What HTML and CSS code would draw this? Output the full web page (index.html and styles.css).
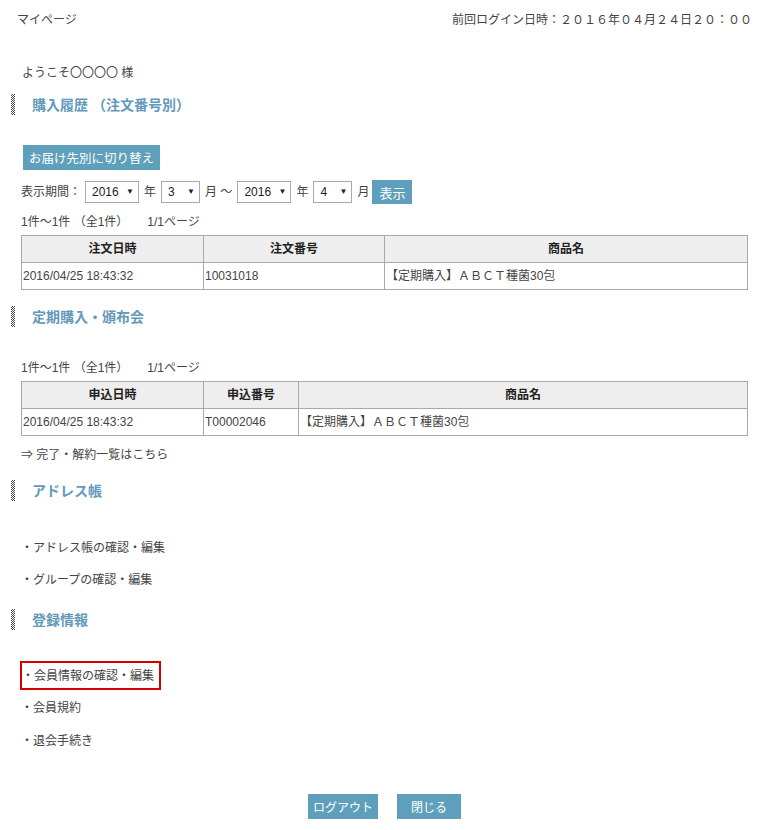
FILE: index.html
```html
<!DOCTYPE html>
<html lang="ja">
<head>
<meta charset="utf-8">
<title>マイページ</title>
<link rel="stylesheet" href="styles.css">
</head>
<body>
<div class="topbar">
  <span>マイページ</span>
  <span>前回ログイン日時：２０１６年０４月２４日２０：００</span>
</div>
<div class="page">
  <p class="line welcome">ようこそ〇〇〇〇 様</p>

  <h2 class="heading h1"><span class="mark"></span><span>購入履歴 （注文番号別）</span></h2>
  <button class="btn switch">お届け先別に切り替え</button>
  <div class="period">
    <span>表示期間：</span>
    <span class="sel w54"><span>2016</span><span class="arr">▼</span></span>
    <span>年</span>
    <span class="sel w39"><span>3</span><span class="arr">▼</span></span>
    <span>月 ～</span>
    <span class="sel w54"><span>2016</span><span class="arr">▼</span></span>
    <span>年</span>
    <span class="sel w39"><span>4</span><span class="arr">▼</span></span>
    <span>月</span>
    <button class="btn show">表示</button>
  </div>
  <p class="line count c1">1件～1件 （全1件）<span class="gap"></span>1/1ページ</p>
  <table class="list">
    <colgroup><col class="c-a"><col class="c-b"><col></colgroup>
    <tr><th>注文日時</th><th>注文番号</th><th>商品名</th></tr>
    <tr><td>2016/04/25 18:43:32</td><td>10031018</td><td>【定期購入】ＡＢＣＴ種菌30包</td></tr>
  </table>

  <h2 class="heading h2"><span class="mark"></span><span>定期購入・頒布会</span></h2>
  <p class="line count c2">1件～1件 （全1件）<span class="gap"></span>1/1ページ</p>
  <table class="list">
    <colgroup><col class="c-a"><col class="c-b2"><col></colgroup>
    <tr><th>申込日時</th><th>申込番号</th><th>商品名</th></tr>
    <tr><td>2016/04/25 18:43:32</td><td>T00002046</td><td>【定期購入】ＡＢＣＴ種菌30包</td></tr>
  </table>
  <p class="line done">⇒ 完了・解約一覧はこちら</p>

  <h2 class="heading h3"><span class="mark"></span><span>アドレス帳</span></h2>
  <p class="line item i1">・アドレス帳の確認・編集</p>
  <p class="line item i2">・グループの確認・編集</p>

  <h2 class="heading h4"><span class="mark"></span><span>登録情報</span></h2>
  <div class="i3"><span class="boxed">・会員情報の確認・編集</span></div>
  <p class="line item i4">・会員規約</p>
  <p class="line item i5">・退会手続き</p>

  <div class="actions">
    <button class="btn logout">ログアウト</button>
    <button class="btn close">閉じる</button>
  </div>
</div>
</body>
</html>
```

FILE: styles.css
```css
* { box-sizing: border-box; }
html, body { margin: 0; padding: 0; background: #fff; }
body {
  font-family: "Liberation Sans", "Noto Sans CJK JP", sans-serif;
  font-size: 12px;
  line-height: 18px;
  color: #444;
  width: 780px;
}
p, h2 { margin: 0; }

.line { height: 18px; white-space: nowrap; }
.gap { display: inline-block; width: 19px; }

.topbar {
  display: flex;
  justify-content: space-between;
  padding: 11px 28px 0 17px;
  height: 29px;
}

.page {
  padding: 0 32px 0 21px;
}

.welcome { margin-top: 35px; padding-left: 1px; }

.heading {
  display: flex;
  align-items: center;
  gap: 17px;
  margin-left: -10px;
  height: 21px;
  font-size: 14px;
  font-weight: bold;
  color: #6399bb;
}
.mark {
  display: block;
  width: 4px;
  height: 21px;
  background: repeating-conic-gradient(#4a4a4a 0 25%, #fff 0 50%) 0 0 / 2px 2px;
}
.h1 { margin-top: 12px; }
.h2 { margin-top: 16px; }
.h3 { margin-top: 16px; }
.h4 { margin-top: 20px; }

.btn {
  border: none;
  background: #5e9fbb;
  color: #fff;
  font-family: "Liberation Sans", "Noto Sans CJK JP", sans-serif;
  padding: 0;
  cursor: pointer;
}
.switch {
  display: block;
  margin: 30px 0 0 2px;
  width: 137px;
  height: 25px;
  font-size: 12.5px;
}

.period {
  display: flex;
  align-items: center;
  gap: 5px;
  margin-top: 10px;
  height: 24px;
}
.period > span:first-child { margin-right: -1px; }
.sel {
  display: inline-flex;
  align-items: center;
  justify-content: space-between;
  height: 22px;
  border: 1px solid #a9a9a9;
  padding: 0 4px 0 6px;
  color: #222;
  font-size: 12px;
  background: #fff;
}
.sel .arr { font-size: 8px; color: #222; }
.w54 { width: 54px; }
.w39 { width: 39px; }
.show {
  width: 40px;
  height: 24px;
  font-size: 13px;
  margin-left: -2px;
}

.count { margin-top: 9px; }
.c2 { margin-top: 32px; }

.list {
  width: 727px;
  margin-top: 4px;
  border-collapse: collapse;
}
.list th, .list td {
  border: 1px solid #a9a9a9;
  padding: 0 1px;
  font-size: 12px;
  line-height: 18px;
}
.list th {
  background: #eee;
  color: #222;
  height: 27px;
  text-align: center;
  font-weight: bold;
}
.list td {
  height: 27px;
  text-align: left;
  color: #444;
}
.c-a { width: 182px; }
.c-b { width: 181px; }
.c-b2 { width: 95px; }

.done { margin-top: 10px; }

.i1 { margin-top: 38px; }
.i2 { margin-top: 14px; }
.i3 { margin-top: 31px; height: 29px; }
.i4 { margin-top: 9px; }
.i5 { margin-top: 15px; }
.boxed {
  display: inline-flex;
  align-items: center;
  height: 29px;
  margin-left: -1px;
  border: 2px solid #d40000;
  padding: 0 5px 0 0;
}

.actions {
  display: flex;
  justify-content: center;
  gap: 19px;
  margin-top: 44px;
}
.logout { width: 70px; height: 25px; font-size: 12px; }
.close { width: 64px; height: 25px; font-size: 12px; }
```
